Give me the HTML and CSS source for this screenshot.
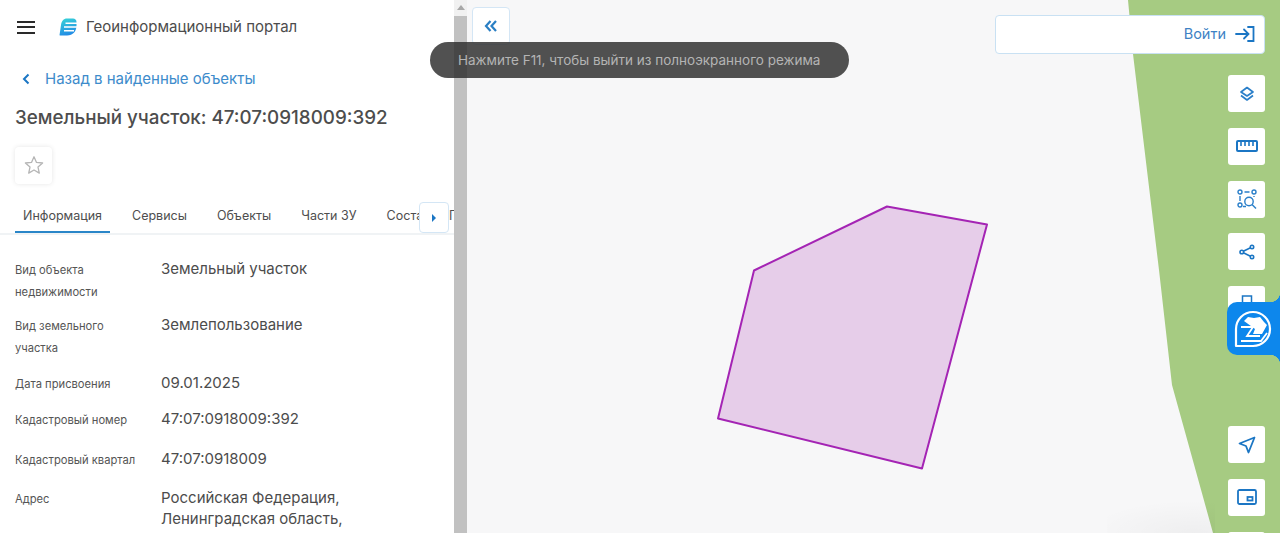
FILE: index.html
```html
<!DOCTYPE html>
<html lang="ru">
<head>
<meta charset="utf-8">
<title>Геоинформационный портал</title>
<link rel="stylesheet" href="styles.css">
</head>
<body>
<div class="app">
  <aside class="panel">
    <header class="brand">
      <button class="burger" aria-label="Меню"><span></span><span></span><span></span></button>
      <svg class="logo" viewBox="0 0 18 18" width="18" height="18">
        <defs><linearGradient id="lg" x1="0.300" y1="0" x2="0.600" y2="1"><stop offset="0" stop-color="#35d0d8"/><stop offset="1" stop-color="#2288e6"/></linearGradient></defs>
        <path d="M8 0.500H14C16 .5 17.500 2 17.500 4V8C17.500 13 14 17.500 8 17.500H1.200C.6 17.500 .5 17 .6 16.500L2 7C2.600 3 4.500 .5 8 .5Z" fill="url(#lg)"/>
        <path d="M6.500 5.200H18M5 9H18M5 12.800H15" stroke="#fff" stroke-width="1.500" fill="none"/>
      </svg>
      <span class="brand-name">Геоинформационный портал</span>
    </header>
    <a class="back"><svg class="back-icon" viewBox="0 0 8 12" width="8" height="12"><path d="M6.500 1.500 2 6l4.500 4.500" fill="none" stroke="#1b76c4" stroke-width="2"/></svg>Назад в найденные объекты</a>
    <h1 class="title">Земельный участок: 47:07:0918009:392</h1>
    <button class="fav" aria-label="Избранное"><svg viewBox="0 0 20 20" width="20" height="20"><path d="M10 1.800 12.500 7.400 18.600 8 14 12.100 15.300 18.100 10 15 4.700 18.100 6 12.100 1.400 8 7.500 7.400Z" fill="none" stroke="#b5b5b5" stroke-width="1.300" stroke-linejoin="round"/></svg></button>
    <nav class="tabs">
      <span class="tab active">Информация</span>
      <span class="tab">Сервисы</span>
      <span class="tab">Объекты</span>
      <span class="tab">Части ЗУ</span>
      <span class="tab">Состав ЕЗП</span>
      <button class="tab-next" aria-label="Далее"><svg viewBox="0 0 6 10" width="6" height="10"><path d="M1 1 5 5 1 9Z" fill="#1b76c4"/></svg></button>
    </nav>
    <dl class="info">
      <div class="row row-a"><dt>Вид объекта недвижимости</dt><dd>Земельный участок</dd></div>
      <div class="row row-b"><dt>Вид земельного участка</dt><dd>Землепользование</dd></div>
      <div class="row row-c"><dt>Дата присвоения</dt><dd>09.01.2025</dd></div>
      <div class="row row-d"><dt>Кадастровый номер</dt><dd>47:07:0918009:392</dd></div>
      <div class="row row-e"><dt>Кадастровый квартал</dt><dd>47:07:0918009</dd></div>
      <div class="row"><dt>Адрес</dt><dd>Российская Федерация, Ленинградская область, Всеволожский муниципальный</dd></div>
    </dl>
  </aside>
  <div class="scrollbar"><div class="scroll-up"><svg viewBox="0 0 8 5" width="8" height="5"><path d="M4 0 8 5H0Z" fill="#a8a8a8"/></svg></div><div class="scroll-thumb"></div></div>
  <main class="map">
    <svg class="map-canvas" viewBox="467 0 813 533" width="813" height="533">
      <path d="M1128 0 1133 54 1159 270 1172 385 1213 533H1280V0Z" fill="#a6cb82"/>
      <path d="M718 418.500 754 270.500 887 206.500 987 224.500 922 468.500Z" fill="#e6cde9" stroke="#a424b4" stroke-width="2" stroke-linejoin="round"/>
    </svg>
    <div class="bottom-shade"></div>
    <button class="collapse" aria-label="Свернуть"><svg viewBox="0 0 14 12" width="14" height="12"><path d="M6.500 1 2 6l4.500 5M12 1 7.500 6l4.500 5" fill="none" stroke="#2a7fc4" stroke-width="2.200"/></svg></button>
    <button class="login"><span>Войти</span>
      <svg viewBox="0 0 20 16" width="20" height="16"><path d="M13 1H18.500V15H13" fill="none" stroke="#1b76c4" stroke-width="1.800" stroke-linecap="round"/><path d="M1 8H13M9 3.500 13.500 8 9 12.500" fill="none" stroke="#1b76c4" stroke-width="1.800" stroke-linecap="round"/></svg>
    </button>
    <div class="tools">
      <button class="tool"><svg viewBox="0 0 16 16" width="16" height="16"><path d="M8 1.500 14 6 8 10 2 6Z" fill="none" stroke="#2a7fc9" stroke-width="1.700" stroke-linejoin="round"/><path d="M2 9.500 8 14 14 9.500" fill="none" stroke="#2a7fc9" stroke-width="1.700" stroke-linejoin="round"/></svg></button>
      <button class="tool"><svg viewBox="0 0 22 12" width="22" height="12"><rect x="1" y="1" width="20" height="10" rx="1" fill="none" stroke="#1b76c4" stroke-width="2"/><path d="M5 1V6M9 1V6M13 1V6M17 1V6" stroke="#1b76c4" stroke-width="1.600"/></svg></button>
      <button class="tool"><svg viewBox="0 0 20 20" width="20" height="20" fill="none" stroke="#2a7fc9" stroke-width="1.400"><circle cx="3" cy="3" r="2"/><circle cx="17" cy="3" r="2"/><circle cx="3" cy="16" r="2"/><path d="M7.500 3H12.500M3 7V12M17 7V8M6 17.500H9"/><circle cx="12" cy="12.500" r="4.200"/><path d="M15 15.500 19 19.500"/></svg></button>
      <button class="tool"><svg viewBox="0 0 16 16" width="16" height="16" fill="none" stroke="#1b76c4" stroke-width="1.600"><circle cx="13" cy="3" r="1.700"/><circle cx="13" cy="13" r="1.700"/><circle cx="2.800" cy="8" r="1.800"/><path d="M4.300 7.200 11.500 3.800M4.300 8.800 11.500 12.200"/></svg></button>
      <button class="tool tool-print"><svg viewBox="0 0 16 16" width="16" height="16" fill="none" stroke="#1b76c4" stroke-width="1.500"><path d="M3.500 8V1H12.500V8"/></svg></button>
      <button class="tool tool-gap"><svg viewBox="0 0 18 18" width="18" height="18"><path d="M16.500 1.500 1.500 7.500 8 10 10.500 16.500Z" fill="none" stroke="#1b76c4" stroke-width="1.800" stroke-linejoin="round"/></svg></button>
      <button class="tool"><svg viewBox="0 0 20 16" width="20" height="16" fill="none" stroke="#1b76c4" stroke-width="1.800"><rect x="1" y="1" width="18" height="14" rx="1.500"/><rect x="10.500" y="8" width="5" height="3.500"/></svg></button>
      <button class="tool"></button>
    </div>
    <div class="mask-tab">
      <svg viewBox="0 0 40 40" width="40" height="40">
        <path d="M3 37V20A17 17 0 1 1 20 37Z" fill="none" stroke="#fff" stroke-width="2.200" stroke-linejoin="round"/>
        <path d="M11 12 15 8 21 9 27 8 31 13 34 16 29 25H20L22 20Z" fill="#fff"/>
        <path d="M8 32H28L34 24" fill="none" stroke="#fff" stroke-width="1.800"/>
        <path d="M8 18H20L14 27H27" fill="none" stroke="#fff" stroke-width="1.800"/>
      </svg>
    </div>
    <div class="toast">Нажмите F11, чтобы выйти из полноэкранного режима</div>
  </main>
</div>
</body>
</html>
```
FILE: styles.css
```css
* { box-sizing: border-box; }
html, body { margin: 0; height: 533px; overflow: hidden; }
body { font-family: Inter, "Noto Sans", sans-serif; color: #4a4a4a; background: #fff; }
button { font: inherit; cursor: pointer; }

.app { display: flex; height: 533px; overflow: hidden; }

.panel { width: 454px; height: 533px; flex: none; overflow: hidden; background: #fff; }

.brand { display: flex; align-items: center; height: 18px; margin: 18px 0 0 17px; }
.burger { display: flex; flex-direction: column; gap: 3.500px; width: 18px; padding: 0; border: 0; background: none; }
.burger span { display: block; height: 2px; background: #2a2a2a; }
.logo { margin-left: 24px; flex: none; }
.brand-name { margin-left: 9px; font-size: 15px; line-height: 18px; color: #4c4c4c; }

.back { display: flex; align-items: center; margin: 34px 0 0 22px; font-size: 15px; line-height: 18px; color: #3d8bcb; }
.back-icon { margin-right: 15px; flex: none; }

.title { margin: 18px 0 0 15px; font-size: 18.800px; line-height: 24px; font-weight: 500; color: #4d4d4d; white-space: nowrap; }

.fav { display: flex; align-items: center; justify-content: center; width: 37px; height: 37px; margin: 17px 0 0 15px; padding: 0 0 2px; border: 0; border-radius: 4px; background: #fff; box-shadow: 0 0 5px rgba(0,0,0,.1); }

.tabs { position: relative; display: flex; gap: 14px; height: 38px; margin-top: 13px; padding-left: 15px; border-bottom: 2px solid #f0f3f5; white-space: nowrap; overflow: hidden; }
.tab { flex: none; height: 36px; padding: 1px 8px 0; font-size: 12.500px; line-height: 35px; color: #4e4e4e; }
.tab.active { border-bottom: 2px solid #2a86c8; }
.tab-next { position: absolute; top: 5px; left: 419px; display: flex; align-items: center; justify-content: center; width: 30px; height: 31px; padding: 0; border: 1px solid #d4e6f5; border-radius: 4px; background: #fff; }

.info { margin: 23px 0 0; }
.row { display: grid; grid-template-columns: 146px 240px; padding-left: 15px; }
.row-a { padding-bottom: 11px; }
.row-b { padding-bottom: 13px; }
.row-c { padding-bottom: 12.500px; }
.row-d { padding-bottom: 16.500px; }
.row-e { padding-bottom: 15.500px; }
dt { font-size: 11.200px; line-height: 21.500px; width: 125px; color: #555; padding-top: 2px; }
dd { margin: 0; font-size: 15px; line-height: 21px; color: #4c4c4c; }

.scrollbar { width: 13px; flex: none; display: flex; flex-direction: column; background: #f1f1f1; }
.scroll-up { height: 16px; display: flex; justify-content: center; padding-top: 5px; }
.scroll-thumb { flex: 1; background: #c1c1c1; }

.map { position: relative; flex: 1; background: #f7f7f8; }
.map-canvas { position: absolute; inset: 0; display: block; }
.bottom-shade { position: absolute; left: 640px; top: 500px; width: 108px; height: 33px; background: radial-gradient(ellipse 100% 100% at 80% 100%, rgba(0,0,0,.035), transparent); }

.collapse { position: absolute; left: 5px; top: 7px; display: flex; align-items: center; justify-content: center; width: 38px; height: 38px; padding: 0; border: 1px solid #d4e6f5; border-radius: 4px; background: #fff; }

.login { position: absolute; left: 528px; top: 15px; width: 270px; height: 39px; display: flex; align-items: center; justify-content: flex-end; gap: 9px; padding: 0 9px 2px 0; border: 1px solid #c9e1f3; border-radius: 4px; background: #fff; color: #3d82c4; font-size: 14.500px; }

.tools { position: absolute; top: 75px; right: 15px; display: flex; flex-direction: column; gap: 15.750px; height: 458px; overflow: hidden; }
.tool { display: flex; align-items: center; justify-content: center; width: 37px; height: 37px; padding: 0; border: 0; border-radius: 3px; background: #fff; flex: none; }
.tool-print { align-items: flex-start; padding-top: 9px; }
.tool-gap { margin-top: 87.250px; }

.mask-tab { position: absolute; left: 760px; top: 302px; width: 53px; height: 53px; display: flex; align-items: center; padding-left: 6px; background: #0d87ec; border-radius: 10px 0 0 10px; }
.mask-tab::before, .mask-tab::after { content: ""; position: absolute; right: 0; width: 10px; height: 10px; }
.mask-tab::before { top: -10px; background: radial-gradient(circle at 0 0, transparent 10px, #0d87ec 10.500px); }
.mask-tab::after { bottom: -10px; background: radial-gradient(circle at 0 100%, transparent 10px, #0d87ec 10.500px); }

.toast { position: absolute; left: -37px; top: 42px; width: 419px; height: 36px; padding-left: 28px; border-radius: 18px; background: rgba(48,48,48,.84); color: #b4b4b4; font-size: 13.500px; line-height: 36px; white-space: nowrap; }
```
